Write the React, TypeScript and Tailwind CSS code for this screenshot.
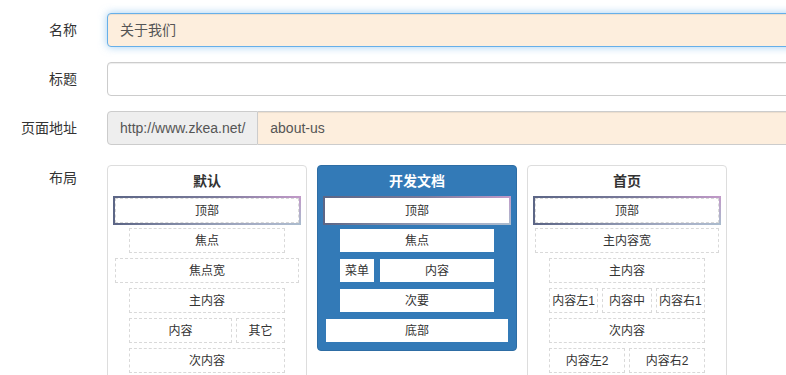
import React from "react";

const FONT = "font-['Liberation_Sans','Noto_Sans_CJK_SC',sans-serif]";

const BASE = "h-[25px] pt-[2px] bg-white flex items-center justify-center text-[12px] leading-[21px] text-[#333]";

function Row({
  children,
  narrow,
  blue,
  selected,
}: {
  children: React.ReactNode;
  narrow?: boolean;
  blue?: boolean;
  selected?: boolean;
}) {
  const inner = blue
    ? selected
      ? `${BASE} border border-white`
      : `${BASE} border border-[#337ab7]`
    : `${BASE} border border-dashed border-[#d9d9d9]`;
  const box = <div className={inner}>{children}</div>;
  if (selected) {
    return (
      <div className="-mx-[2px] -my-[2px] p-[2px] bg-[linear-gradient(to_bottom_right,transparent_50%,#a9bccd),linear-gradient(to_right,#5c6686,#7b7b9b_55%,#c29ac9)]">
        {box}
      </div>
    );
  }
  return <div className={narrow ? "mx-[14px]" : ""}>{box}</div>;
}

function Cell({ children, blue }: { children: React.ReactNode; blue?: boolean }) {
  return (
    <div
      className={
        blue
          ? `${BASE} border border-[#337ab7]`
          : `${BASE} border border-dashed border-[#d9d9d9]`
      }
    >
      {children}
    </div>
  );
}

function Card({
  title,
  blue,
  children,
}: {
  title: string;
  blue?: boolean;
  children: React.ReactNode;
}) {
  return (
    <div
      className={
        blue
          ? "w-[200px] shrink-0 self-start rounded-[4px] border border-[#2e6da4] bg-[#337ab7] px-[7px] pb-[7px]"
          : "w-[200px] shrink-0 self-start rounded-[4px] border border-[#ddd] bg-white px-[7px] pb-[7px]"
      }
    >
      <div
        className={
          blue
            ? "pt-[5px] pb-[7px] text-center text-[14px] leading-[20px] font-bold text-white"
            : "pt-[5px] pb-[7px] text-center text-[14px] leading-[20px] font-bold text-[#333]"
        }
      >
        {title}
      </div>
      <div className="flex flex-col gap-[5px]">{children}</div>
    </div>
  );
}

export default function App() {
  return (
    <div className={`w-[786px] h-[375px] overflow-hidden bg-white ${FONT}`}>
      <div className="pt-[13px] flex flex-col">
        {/* 名称 */}
        <div className="flex items-center gap-[30px]">
          <div className="w-[77px] shrink-0 text-right text-[14px] leading-[20px] text-[#333]">名称</div>
          <div className="w-[720px] shrink-0 h-[34px] rounded-[4px] border border-[#66afe9] bg-[#fdeedd] px-[12px] flex items-center text-[14px] text-[#555] shadow-[inset_0_1px_1px_rgba(0,0,0,0.075),0_0_8px_rgba(102,175,233,0.6)]">
            关于我们
          </div>
        </div>
        {/* 标题 */}
        <div className="mt-[15px] flex items-center gap-[30px]">
          <div className="w-[77px] shrink-0 text-right text-[14px] leading-[20px] text-[#333]">标题</div>
          <div className="w-[720px] shrink-0 h-[34px] rounded-[4px] border border-[#ccc] bg-white shadow-[inset_0_1px_1px_rgba(0,0,0,0.075)]"></div>
        </div>
        {/* 页面地址 */}
        <div className="mt-[15px] flex items-center gap-[30px]">
          <div className="w-[77px] shrink-0 text-right text-[14px] leading-[20px] text-[#333]">页面地址</div>
          <div className="w-[720px] shrink-0 h-[34px] flex">
            <div className="h-full shrink-0 rounded-l-[4px] border border-[#ccc] bg-[#eee] px-[12px] flex items-center text-[14px] text-[#555]">
              http://www.zkea.net/
            </div>
            <div className="h-full flex-1 rounded-r-[4px] border border-l-0 border-[#ccc] bg-[#fdeedd] px-[12px] flex items-center text-[14px] text-[#555] shadow-[inset_0_1px_1px_rgba(0,0,0,0.075)]">
              about-us
            </div>
          </div>
        </div>
        {/* 布局 */}
        <div className="mt-[20px] flex items-start gap-[30px]">
          <div className="w-[77px] shrink-0 pt-[3px] text-right text-[14px] leading-[20px] text-[#333]">布局</div>
          <div className="flex gap-[10px]">
            <Card title="默认">
              <Row selected>顶部</Row>
              <Row narrow>焦点</Row>
              <Row>焦点宽</Row>
              <Row narrow>主内容</Row>
              <div className="mx-[14px] flex gap-[4px]">
                <div className="w-[103px] shrink-0">
                  <Cell>内容</Cell>
                </div>
                <div className="flex-1">
                  <Cell>其它</Cell>
                </div>
              </div>
              <Row narrow>次内容</Row>
              <Row>底部</Row>
            </Card>
            <Card title="开发文档" blue>
              <Row selected blue>顶部</Row>
              <Row narrow blue>焦点</Row>
              <div className="mx-[14px] flex gap-[4px]">
                <div className="w-[36px] shrink-0">
                  <Cell blue>菜单</Cell>
                </div>
                <div className="flex-1">
                  <Cell blue>内容</Cell>
                </div>
              </div>
              <Row narrow blue>次要</Row>
              <Row blue>底部</Row>
            </Card>
            <Card title="首页">
              <Row selected>顶部</Row>
              <Row>主内容宽</Row>
              <Row narrow>主内容</Row>
              <div className="mx-[14px] grid grid-cols-3 gap-[4px]">
                <Cell>内容左1</Cell>
                <Cell>内容中</Cell>
                <Cell>内容右1</Cell>
              </div>
              <Row narrow>次内容</Row>
              <div className="mx-[14px] grid grid-cols-2 gap-[4px]">
                <Cell>内容左2</Cell>
                <Cell>内容右2</Cell>
              </div>
              <Row>底部</Row>
            </Card>
          </div>
        </div>
      </div>
    </div>
  );
}
